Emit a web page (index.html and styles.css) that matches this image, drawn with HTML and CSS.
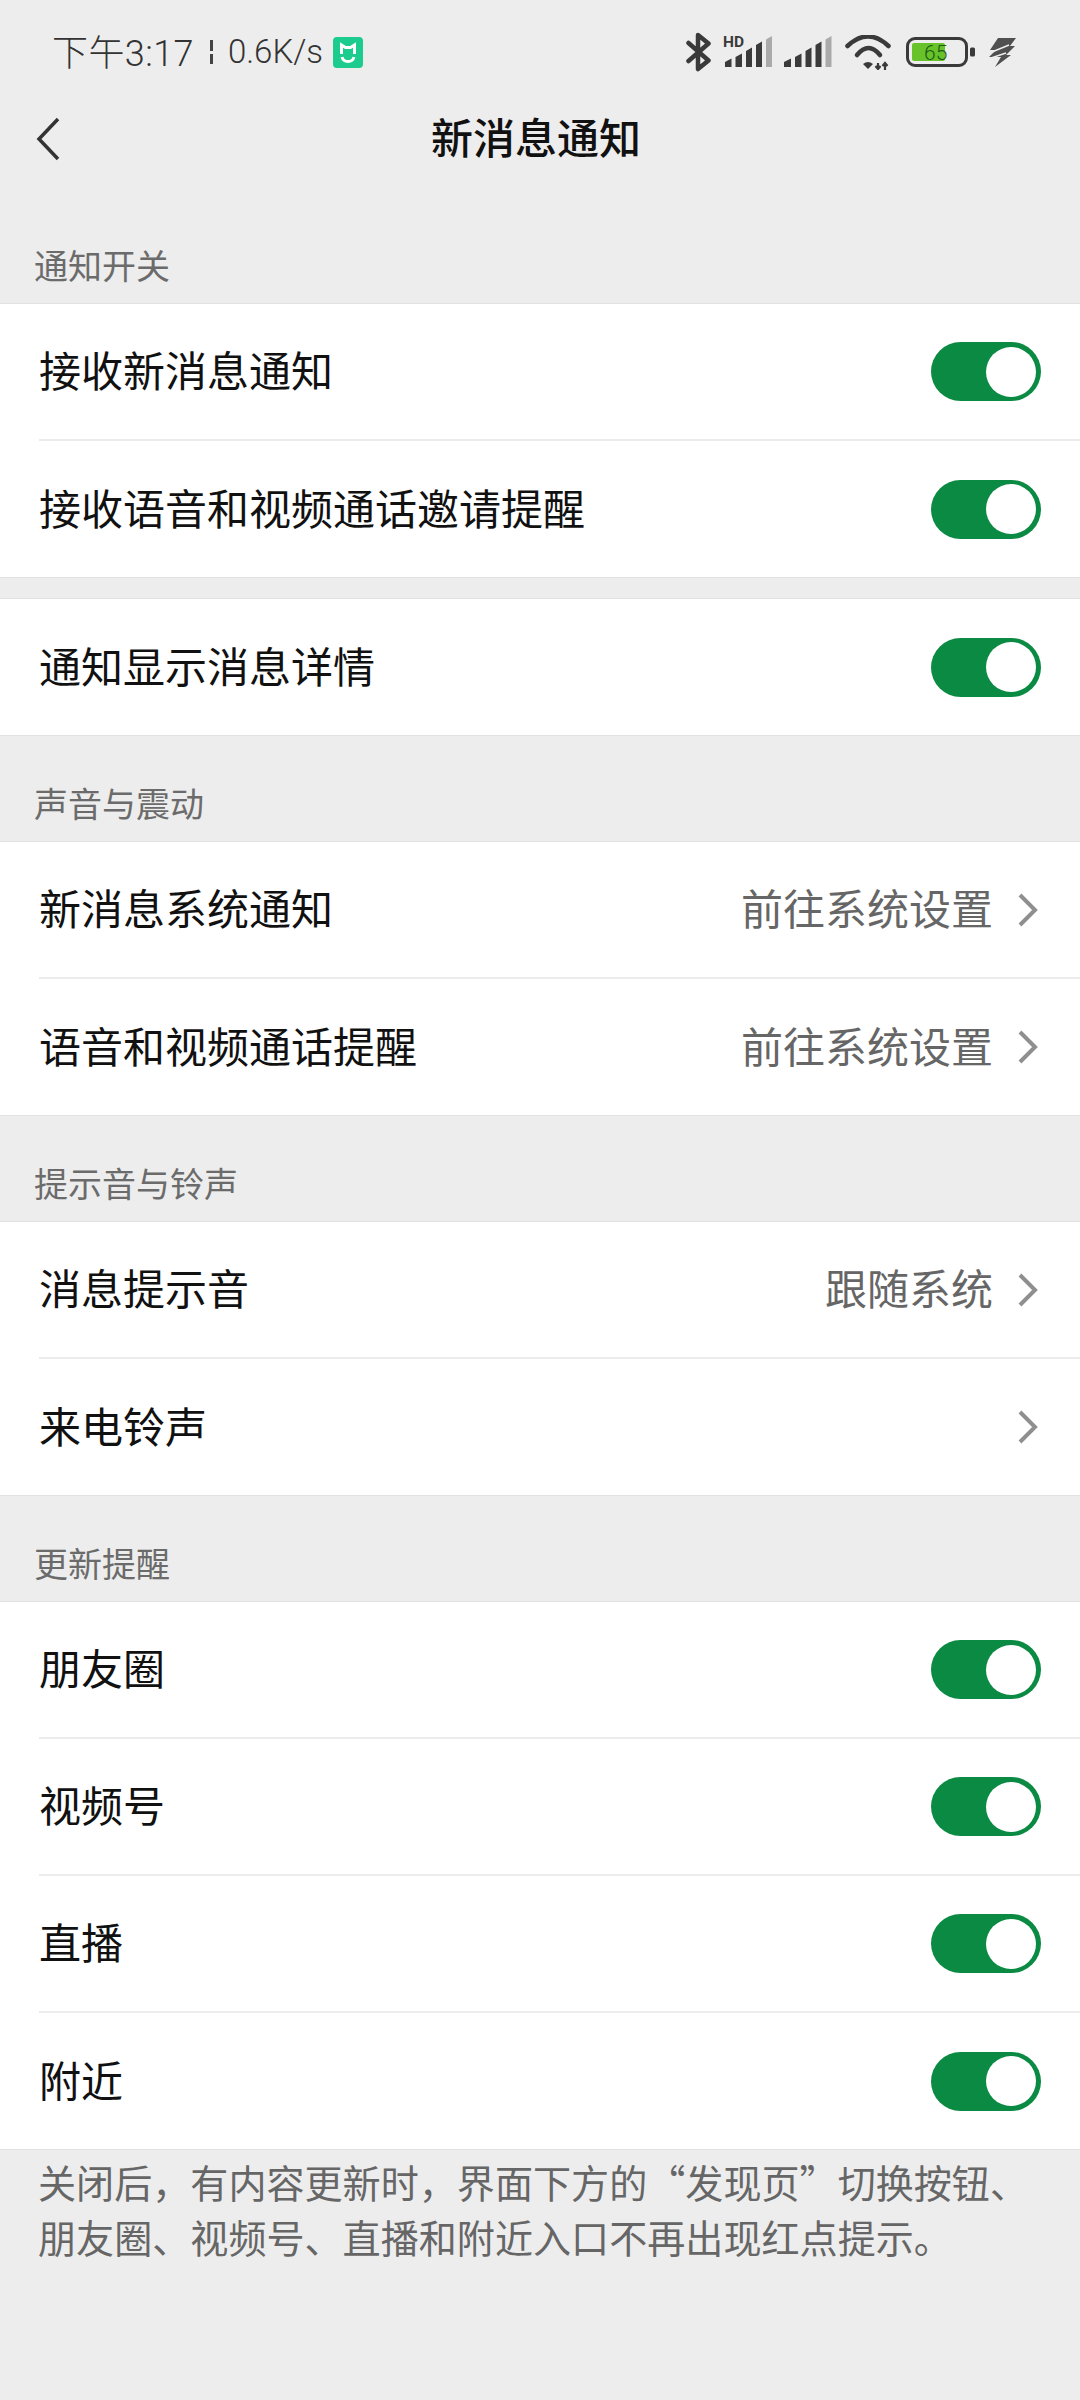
FILE: index.html
```html
<!DOCTYPE html>
<html lang="zh-CN">
<head>
    <meta charset="UTF-8">
    <meta name="viewport" content="width=device-width, initial-scale=1.0">
    <title>新消息通知</title>
    <link rel="stylesheet" href="styles.css">
</head>
<body>
    <!-- Status bar -->
    <div class="status-bar">
        <div class="status-left">
            <span class="clock">下午3:17</span>
            <span class="speed-sep"></span>
            <span class="speed">0.6K/s</span>
            <svg class="mi-icon" width="30" height="31" viewBox="0 0 30 31" fill="none" stroke="#fff" stroke-width="3">
                <rect width="30" height="31" rx="4" fill="#1ccb8e" stroke="none"/>
                <path d="M8.500 17 V8 L12.500 10.500 H17.500 L21.500 8 V17"/>
                <path d="M9 20 C10.500 26 19.500 26 21 20"/>
            </svg>
        </div>
        <div class="status-right">
            <svg width="25" height="40" viewBox="0 0 25 40" fill="none" stroke="#3a3a3a" stroke-width="4.500" stroke-linejoin="round" stroke-linecap="round">
                <path d="M2.500 11 L22.500 28.500 L12 37 V3 L22.500 11.500 L2.500 29"/>
            </svg>
            <svg width="49" height="40" viewBox="0 -4 49 40">
                <text x="0" y="11" class="hd-text">HD</text>
                <path d="M2 31 V26 L8.500 22.500 V31 Z" fill="#3a3a3a"/>
                <path d="M12.500 31 V21 L19 17.500 V31 Z" fill="#3a3a3a"/>
                <path d="M23 31 V15 L29 11.500 V31 Z" fill="#3a3a3a"/>
                <path d="M33 31 V9 L39 5.500 V31 Z" fill="#3a3a3a"/>
                <path d="M43 31 V3.500 L49 0 V31 Z" fill="#aaa"/>
            </svg>
            <svg width="48" height="32" viewBox="0 0 48 32">
                <path d="M0 31 V26 L7 22.500 V31 Z" fill="#3a3a3a"/>
                <path d="M11 31 V21 L17.500 17.500 V31 Z" fill="#3a3a3a"/>
                <path d="M21.500 31 V15 L27.500 11.500 V31 Z" fill="#3a3a3a"/>
                <path d="M31.500 31 V9 L37.500 5.500 V31 Z" fill="#3a3a3a"/>
                <path d="M41.500 31 V3.500 L47.500 0 V31 Z" fill="#aaa"/>
            </svg>
            <svg class="wifi" width="46" height="35" viewBox="0 0 46 35" fill="none" stroke="#3a3a3a" stroke-width="4.500" stroke-linecap="round">
                <path d="M2.500 11 Q23 -8 43.500 11"/>
                <path d="M12 20 Q23.500 6 35 20"/>
                <path d="M18 29 Q23 25 28 29 L23 34 Z" fill="#3a3a3a" stroke="none"/>
                <path d="M33 28 V34 M30.500 31 L33 34 L35.500 31 M40 35 V28 M37.500 31 L40 28 L42.500 31" stroke-width="2.200" stroke-linecap="butt"/>
            </svg>
            <svg class="battery" width="69" height="30" viewBox="0 0 69 30">
                <rect x="1.500" y="1.500" width="59" height="27" rx="7.500" fill="none" stroke="#3a3a3a" stroke-width="3"/>
                <rect x="6" y="6" width="33" height="18" rx="2" fill="#68c32b"/>
                <rect x="64" y="10.500" width="5" height="9" rx="1.500" fill="#3a3a3a"/>
                <text x="18" y="22.500" class="battery-text">65</text>
            </svg>
            <svg class="bolt" width="27" height="29" viewBox="0 0 27 29">
                <path d="M9 0 H27 L21 8 H26 L17 17 H22 L6 29 L12 19 H0 L7 12 H1 Z" fill="#505050"/>
                <path d="M3 14 L20 7 M2 20 L17 15" stroke="#ededed" stroke-width="1.500"/>
            </svg>
        </div>
    </div>

    <!-- Title bar -->
    <div class="nav-bar">
        <svg class="back-icon" width="24" height="44" viewBox="0 0 24 44" fill="none" stroke="#333" stroke-width="3.500">
            <path d="M22 2 L3 22 L22 42"/>
        </svg>
        <span class="nav-title">新消息通知</span>
    </div>

    <div class="section-label">通知开关</div>
    <div class="group">
        <div class="row"><span class="row-text">接收新消息通知</span><span class="toggle"><span class="knob"></span></span></div>
        <div class="row"><span class="row-text">接收语音和视频通话邀请提醒</span><span class="toggle"><span class="knob"></span></span></div>
    </div>
    <div class="group group-next">
        <div class="row"><span class="row-text">通知显示消息详情</span><span class="toggle"><span class="knob"></span></span></div>
    </div>

    <div class="section-label">声音与震动</div>
    <div class="group">
        <div class="row">
            <span class="row-text">新消息系统通知</span>
            <span class="row-value">前往系统设置</span>
            <svg class="chevron" width="20" height="34" viewBox="0 0 20 34" fill="none" stroke="#8f8f8f" stroke-width="4"><path d="M2 2 L17 17 L2 32"/></svg>
        </div>
        <div class="row">
            <span class="row-text">语音和视频通话提醒</span>
            <span class="row-value">前往系统设置</span>
            <svg class="chevron" width="20" height="34" viewBox="0 0 20 34" fill="none" stroke="#8f8f8f" stroke-width="4"><path d="M2 2 L17 17 L2 32"/></svg>
        </div>
    </div>

    <div class="section-label">提示音与铃声</div>
    <div class="group">
        <div class="row">
            <span class="row-text">消息提示音</span>
            <span class="row-value">跟随系统</span>
            <svg class="chevron" width="20" height="34" viewBox="0 0 20 34" fill="none" stroke="#8f8f8f" stroke-width="4"><path d="M2 2 L17 17 L2 32"/></svg>
        </div>
        <div class="row">
            <span class="row-text">来电铃声</span>
            <svg class="chevron" width="20" height="34" viewBox="0 0 20 34" fill="none" stroke="#8f8f8f" stroke-width="4"><path d="M2 2 L17 17 L2 32"/></svg>
        </div>
    </div>

    <div class="section-label">更新提醒</div>
    <div class="group">
        <div class="row"><span class="row-text">朋友圈</span><span class="toggle"><span class="knob"></span></span></div>
        <div class="row"><span class="row-text">视频号</span><span class="toggle"><span class="knob"></span></span></div>
        <div class="row"><span class="row-text">直播</span><span class="toggle"><span class="knob"></span></span></div>
        <div class="row"><span class="row-text">附近</span><span class="toggle"><span class="knob"></span></span></div>
    </div>

    <p class="footnote">关闭后，有内容更新时，界面下方的“发现页”切换按钮、<br>朋友圈、视频号、直播和附近入口不再出现红点提示。</p>
</body>
</html>
```

FILE: styles.css
```css
body {
    font-family: "Noto Sans CJK SC", Roboto, sans-serif;
    margin: 0;
    height: 2400px;
    overflow: hidden;
    background-color: #ededed;
    color: #111;
}
.status-bar {
    display: flex;
    justify-content: space-between;
    align-items: center;
    height: 104px;
    padding: 0 64px 0 52px;
}
.status-left {
    display: flex;
    align-items: center;
    font-family: Roboto, "Noto Sans CJK SC", sans-serif;
    font-size: 36px;
    font-weight: 300;
    color: #333;
}
.clock {
    margin-bottom: 4px;
    letter-spacing: 0.4px;
}
.speed {
    margin-bottom: 2px;
    font-size: 33px;
}
.speed-sep {
    width: 3px;
    height: 24px;
    margin: 0 15px 0 16px;
    background: linear-gradient(#444 0 45%, transparent 45% 58%, #444 58%);
}
.mi-icon {
    margin-left: 10px;
}
.status-right {
    display: flex;
    align-items: center;
    gap: 12px;
}
.wifi {
    margin-left: 1px;
}
.battery {
    margin-left: 3px;
}
.bolt {
    margin-left: 2px;
}
.hd-text {
    font-family: Roboto, sans-serif;
    font-size: 15.5px;
    font-weight: 700;
    fill: #3a3a3a;
}
.battery-text {
    font-family: Roboto, sans-serif;
    font-size: 21px;
    font-weight: 300;
    fill: #1c5a14;
}
.nav-bar {
    display: flex;
    align-items: center;
    height: 70px;
    padding-left: 36px;
    margin-bottom: 24px;
}
.back-icon {
    flex-shrink: 0;
}
.nav-title {
    margin-left: 371px;
    margin-bottom: 8px;
    font-size: 42px;
    font-weight: 500;
    color: #111;
}
.section-label {
    box-sizing: border-box;
    height: 105px;
    padding: 47px 0 0 34px;
    font-size: 34px;
    line-height: 40px;
    color: #6b6b6b;
}
.group {
    background-color: white;
    border-top: 1px solid #e2e2e2;
    border-bottom: 1px solid #e2e2e2;
}
.group-next {
    margin-top: 20px;
}
.row {
    display: flex;
    align-items: center;
    box-sizing: border-box;
    height: 137px;
    margin-left: 39px;
    padding-right: 39px;
    border-bottom: 2px solid #ececec;
}
.row:last-child {
    height: 136px;
    border-bottom: none;
}
.row-text {
    flex: 1;
    margin-bottom: 5px;
    font-size: 42px;
    line-height: 60px;
}
.row-value {
    margin-bottom: 5px;
    font-size: 42px;
    line-height: 60px;
    color: #666;
}
.chevron {
    margin-left: 25px;
    margin-right: 3px;
}
.toggle {
    display: flex;
    justify-content: flex-end;
    align-items: center;
    box-sizing: border-box;
    width: 110px;
    height: 59px;
    padding-right: 5px;
    border-radius: 30px;
    background-color: #0a8a43;
}
.knob {
    width: 50px;
    height: 50px;
    border-radius: 50%;
    background-color: white;
}
.footnote {
    margin: 4px 0 0 38px;
    font-size: 38.1px;
    line-height: 55px;
    color: #666;
}
```
